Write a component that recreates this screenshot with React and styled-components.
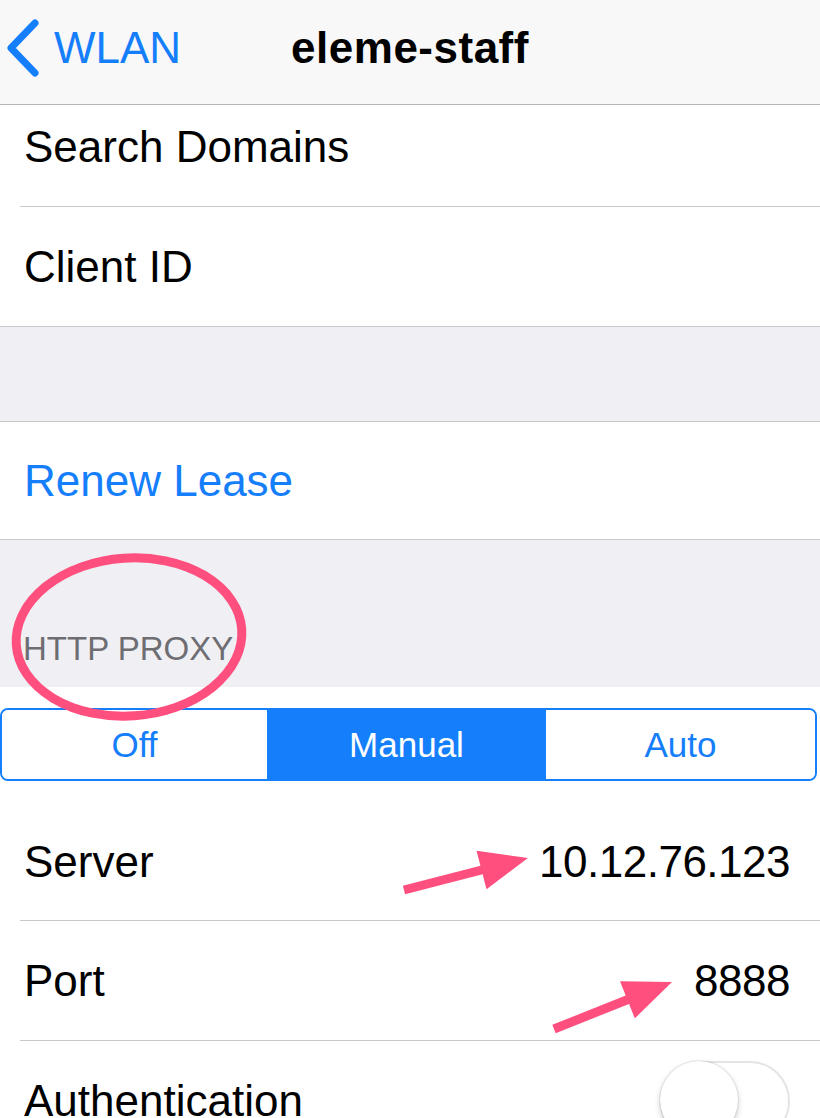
import styled, { createGlobalStyle } from 'styled-components';

const GlobalStyle = createGlobalStyle`
  html, body {
    margin: 0;
    padding: 0;
    background: #efeff4;
  }
  body {
    font-family: "Liberation Sans", Arial, sans-serif;
    -webkit-font-smoothing: antialiased;
  }
`;

const Screen = styled.div`
  position: relative;
  width: 820px;
  height: 1118px;
  overflow: hidden;
  background: #efeff4;
`;

const NavBar = styled.div`
  position: relative;
  height: 104px;
  background: #f8f8f8;
  border-bottom: 1px solid #b5b5b8;
  display: flex;
  align-items: center;
  justify-content: center;
`;

const BackButton = styled.div`
  position: absolute;
  left: 4px;
  top: 0;
  bottom: 0;
  display: flex;
  align-items: center;
  gap: 14px;
  color: #157efb;
  font-size: 44px;
  padding-bottom: 8px;
`;

const Title = styled.div`
  font-size: 44px;
  font-weight: 700;
  color: #000;
  padding-bottom: 8px;
  letter-spacing: 0.5px;
`;

const Group = styled.div`
  background: #fff;
`;

// rows share one inset hairline on top, except the first one in a group
const Row = styled.div`
  position: relative;
  height: ${p => p.h || 118}px;
  box-sizing: border-box;
  padding: 0 30px ${p => p.lift || 0}px 24px;
  display: flex;
  align-items: center;
  justify-content: space-between;
  font-size: 44px;
  color: ${p => (p.link ? '#157efb' : '#000')};

  &:not(:first-child)::before {
    content: '';
    position: absolute;
    top: -1px;
    left: 20px;
    right: 0;
    height: 1px;
    background: #c8c7cc;
  }
`;

const Value = styled.span`
  color: #000;
  letter-spacing: -0.5px;
`;

const Spacer = styled.div`
  height: ${p => p.h}px;
  background: #efeff4;
  border-top: 1px solid #c8c7cc;
  border-bottom: 1px solid #c8c7cc;
  box-sizing: border-box;
`;

const SectionHeader = styled.div`
  height: 148px;
  box-sizing: border-box;
  border-top: 1px solid #c8c7cc;
  padding: 0 0 19px 23px;
  display: flex;
  align-items: flex-end;
  font-size: 33px;
  color: #6d6d72;
`;

const SegmentWrap = styled.div`
  background: #fff;
  padding: 21px 3px 22px 0;
`;

const Segmented = styled.div`
  display: grid;
  grid-template-columns: 266px 278px 1fr;
  height: 73px;
  border: 2px solid #157efb;
  border-radius: 8px;
  overflow: hidden;
  box-sizing: border-box;
`;

const Segment = styled.div`
  display: flex;
  align-items: center;
  justify-content: center;
  font-size: 35px;
  color: ${p => (p.active ? '#fff' : '#157efb')};
  background: ${p => (p.active ? '#157efb' : '#fff')};
  border-right: ${p => (p.last ? 'none' : '1px solid #157efb')};
`;

const Toggle = styled.div`
  position: relative;
  width: 130px;
  height: 80px;
  border-radius: 40px;
  border: 2px solid #e4e4e6;
  box-sizing: border-box;
  background: #fff;
  margin-top: 20px;
  align-self: flex-start;
  flex-shrink: 0;
`;

const Knob = styled.div`
  position: absolute;
  left: -2px;
  top: -2px;
  width: 78px;
  height: 78px;
  border-radius: 50%;
  background: #fff;
  box-shadow: 0 3px 6px rgba(0, 0, 0, 0.2), 0 0 0 1px rgba(0, 0, 0, 0.08);
`;

const Marks = styled.svg`
  position: absolute;
  left: 0;
  top: 0;
  pointer-events: none;
`;

const PINK = '#ff4f7e';

function Chevron() {
  return (
    <svg width="36" height="58" viewBox="0 0 36 58">
      <polyline points="31,4 7,29 31,54" fill="none" stroke="#157efb" strokeWidth="7" strokeLinecap="round" strokeLinejoin="round" />
    </svg>
  );
}

function Arrow({ x1, y1, x2, y2 }) {
  const a = Math.atan2(y2 - y1, x2 - x1);
  const len = 48;
  const w = 20;
  const bx = x2 - Math.cos(a) * len;
  const by = y2 - Math.sin(a) * len;
  const px = -Math.sin(a) * w;
  const py = Math.cos(a) * w;
  return (
    <g>
      <line x1={x1} y1={y1} x2={bx + Math.cos(a) * 6} y2={by + Math.sin(a) * 6} stroke={PINK} strokeWidth="9" />
      <polygon points={`${x2},${y2} ${bx + px},${by + py} ${bx - px},${by - py}`} fill={PINK} />
    </g>
  );
}

export default function App() {
  return (
    <>
      <GlobalStyle />
      <Screen>
        <NavBar>
          <BackButton>
            <Chevron />
            <span>WLAN</span>
          </BackButton>
          <Title>eleme-staff</Title>
        </NavBar>

        <Group>
          <Row h={102} lift={18}>Search Domains</Row>
          <Row h={119}>Client ID</Row>
        </Group>

        <Spacer h={96} />

        <Group>
          <Row h={117} link>Renew Lease</Row>
        </Group>

        <SectionHeader>HTTP PROXY</SectionHeader>

        <SegmentWrap>
          <Segmented>
            <Segment>Off</Segment>
            <Segment active>Manual</Segment>
            <Segment last>Auto</Segment>
          </Segmented>
        </SegmentWrap>

        <Group>
          <Row h={118}>
            Server
            <Value>10.12.76.123</Value>
          </Row>
          <Row h={120}>
            Port
            <Value>8888</Value>
          </Row>
          <Row h={120}>
            Authentication
            <Toggle>
              <Knob />
            </Toggle>
          </Row>
        </Group>

        <Marks width="820" height="1118" viewBox="0 0 820 1118">
          <ellipse cx="129" cy="637" rx="113" ry="79" fill="none" stroke={PINK} strokeWidth="9" transform="rotate(-4 129 637)" />
          <Arrow x1={404} y1={890} x2={528} y2={858} />
          <Arrow x1={554} y1={1029} x2={672} y2={982} />
        </Marks>
      </Screen>
    </>
  );
}
